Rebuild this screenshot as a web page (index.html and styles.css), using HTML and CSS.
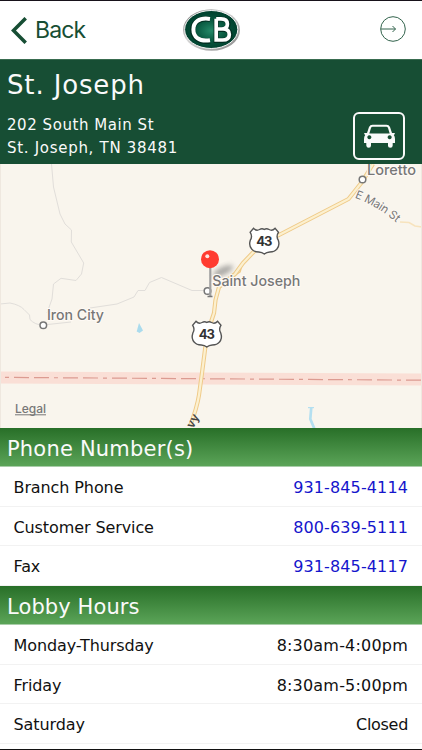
FILE: index.html
```html
<!DOCTYPE html>
<html lang="en">
<head>
<meta charset="utf-8">
<title>St. Joseph branch</title>
<link rel="stylesheet" href="styles.css">
</head>
<body>
<div class="screen">
  <header class="navbar">
    <a class="back">
      <svg width="16" height="27" viewBox="0 0 16 27"><path d="M14.7 1.2 2.5 13.5 14.7 25.8" fill="none" stroke="#174e34" stroke-width="3.5"/></svg>
      <span>Back</span>
    </a>
    <svg class="logo" width="60" height="44" viewBox="181 8 60 44">
      <defs>
        <radialGradient id="oval" cx=".5" cy=".53" r=".5"><stop offset="0" stop-color="#248968"/><stop offset=".6" stop-color="#06543c"/><stop offset="1" stop-color="#00412e"/></radialGradient>
        <linearGradient id="rim" x1="0" y1="0" x2="1" y2="1"><stop offset="0" stop-color="#686868"/><stop offset=".4" stop-color="#d8d8d8"/><stop offset="1" stop-color="#858585"/></linearGradient>
      </defs>
      <ellipse cx="211.5" cy="30" rx="28.5" ry="20.8" fill="url(#rim)"/>
      <ellipse cx="211.2" cy="29.5" rx="26.6" ry="19" fill="url(#oval)" stroke="#f4f4f4" stroke-width="1"/>
      <path d="M210 19.2C199 17.5 192.7 23 192.7 30S199 42.8 210 41" fill="none" stroke="#032f22" stroke-width="5.5"/>
      <path d="M210 18.9C198.5 17.2 193.4 22.5 193.4 29.5S198.5 42 210 40.3" fill="none" stroke="#fff" stroke-width="4"/>
      <path d="M216.2 19V40.3H223Q230 40.3 230 34.5 230 29.3 223.5 29.3H217M216.2 19H221.5Q228 19 228 24.2 228 29.3 222 29.3" fill="none" stroke="#032f22" stroke-width="5.2"/>
      <path d="M216.2 18.8V40H222.5Q229.3 40 229.3 34.5 229.3 29 223 29H217M216.2 18.8H221Q227.4 18.8 227.4 24 227.4 29 221.5 29" fill="none" stroke="#fff" stroke-width="3.7"/>
    </svg>
    <svg class="forward" width="28" height="28" viewBox="0 0 28 28"><g fill="none" stroke="#32634c" stroke-width="1"><circle cx="14" cy="14" r="12.3"/><path d="M2 14H16.5M13.5 11 16.5 14 13.5 17"/></g></svg>
  </header>

  <section class="branch">
    <div>
      <h1>St. Joseph</h1>
      <p class="street">202 South Main St</p>
      <p class="city">St. Joseph, TN 38481</p>
    </div>
    <a class="directions">
      <svg width="31" height="24" viewBox="0 0 31 24"><path fill="#fafafa" fill-rule="evenodd" d="M8.5.7H22.5Q25 .7 26 3L28 9H30.2Q31.2 9 30.8 10L29.8 11Q31 12.5 31 15V19H28.7V21.5Q28.7 23.8 26.3 23.8T24 21.5V19H7V21.5Q7 23.8 4.7 23.8T2.3 21.5V19H0V15Q0 12.5 1.2 11L.2 10Q-.2 9 .8 9H3L5 3Q6 .7 8.5.7ZM8.7 2.7Q7.4 2.7 7 4L5.3 9.5H25.7L24 4Q23.6 2.7 22.3 2.7ZM5.3 11.3A2 2 0 1 0 5.4 11.3ZM25.6 11.3A2 2 0 1 0 25.7 11.3Z"/></svg>
    </a>
  </section>

  <svg class="map" width="422" height="264" viewBox="0 164 422 264">
    <defs>
      <filter id="soft" x="-50%" y="-50%" width="200%" height="200%"><feGaussianBlur stdDeviation="2.5"/></filter>
      <path id="main-street" d="M354.5 197.5Q379 207 398.5 224.5"/>
      <g id="shield">
        <path d="M-10.8-12.8Q-8-9.7-4.8-11.5Q-2.2-13 0-11.5Q2.2-13 4.8-11.5Q8-9.7 10.8-12.8L14.2-8.8Q11.5-4.5 14-.8Q15.8 4.5 12.5 8.2Q10.5 11 5.5 11Q2.2 11.2 0 13Q-2.2 11.2-5.5 11Q-10.5 11-12.5 8.2Q-15.8 4.5-14-.8Q-11.5-4.5-14.2-8.8Z" fill="#fff" stroke="#555" stroke-width="1.4"/>
        <text y="4.6" text-anchor="middle" textLength="16" class="route">43</text>
      </g>
    </defs>
    <rect y="164" width="422" height="264" fill="#f9f5ed"/>
    <g fill="none" stroke="#e1deda" stroke-width="1">
      <path d="M51.5 164 53.5 187 60 214 65 224 71.5 230 71.3 242 83.7 263 81.5 274 76 280.5 61 278.3 53.5 284 52 299 47 313"/>
      <path d="M0 304 10 303Q20 305 24 309.5L29.5 315 30 319.5Q35 325 43 325L71 322"/>
      <path d="M90 308 117 304 134 297 138 290.5 145 290.5 149.5 282.5 161.5 277.5 192 290.5H207"/>
    </g>
    <path d="M0 377.5 422 379.5" fill="none" stroke="#fadfd6" stroke-width="12"/>
    <path d="M5 377.4 422 380.2" fill="none" stroke="#dc9b91" stroke-width="1.2" stroke-dasharray="4 5 15 5 15 5"/>
    <path d="M139 323 143 330.5 139.5 333 136.7 331.5Z" fill="#aadbed"/>
    <path d="M308 407.6H314" stroke="#b4dff0" stroke-width="1.2"/>
    <path d="M311.3 407 310.3 419 314.5 429" fill="none" stroke="#b4dff0" stroke-width="2.7"/>
    <path d="M400 222 409 222.5 415 226 422 227" fill="none" stroke="#f7e3bd" stroke-width="1.5"/>
    <g fill="none" stroke-linejoin="round">
      <path d="M373 164 362 182 348.5 199 279 235 264 241 243 263 235 274 219 287 215.5 300 214 313 207 334 202 373 199 395Q197 408 190 426" stroke="#efca88" stroke-width="4.2"/>
      <path d="M242 265 240 272 231 278" stroke="#efca88" stroke-width="1.5"/>
      <path d="M373 164 362 182 348.5 199 279 235 264 241 243 263 235 274 219 287 215.5 300 214 313 207 334 202 373 199 395Q197 408 190 426" stroke="#fcf0cf" stroke-width="2.2"/>
    </g>
    <use href="#shield" x="264.3" y="241"/>
    <use href="#shield" x="206.8" y="334"/>
    <g fill="#fff" stroke="#777" stroke-width="1.5"><circle cx="362.5" cy="179.5" r="3.3"/><circle cx="43.3" cy="325.2" r="3.3"/><circle cx="207.5" cy="291" r="3.3"/></g>
    <ellipse cx="223" cy="271" rx="11" ry="4" transform="rotate(-25 223 271)" fill="#777" opacity=".6" filter="url(#soft)"/>
    <path d="M210.3 264V296" stroke="#a1a1a1" stroke-width="2.2"/>
    <path d="M207.5 296.5H212.5" stroke="#777" stroke-width="1.5"/>
    <circle cx="210" cy="259.2" r="9" fill="#ff3b30"/><circle cx="207.3" cy="256.3" r="2" fill="#ffe5e1"/>
    <g class="place">
      <text x="367" y="174.5" textLength="49" lengthAdjust="spacingAndGlyphs">Loretto</text>
      <text x="212.3" y="286" textLength="88" lengthAdjust="spacingAndGlyphs">Saint Joseph</text>
      <text x="47" y="320" textLength="57" lengthAdjust="spacingAndGlyphs">Iron City</text>
    </g>
    <text class="road"><textPath href="#main-street" textLength="49">E Main St</textPath></text>
    <text class="highway-name" x="193" y="429" transform="rotate(-62 193 429)">vy</text>
    <text class="legal" x="15" y="413" textLength="31">Legal</text>
    <path d="M15 414.8H46" stroke="#777" stroke-width="1"/>
    <path d="M.5 164V428M421.5 164V428" stroke="#efe8df" stroke-width="1"/>
  </svg>

  <section>
    <h2 class="phones-title">Phone Number(s)</h2>
    <dl>
      <div class="row"><dt>Branch Phone</dt><dd class="phone">931-845-4114</dd></div>
      <div class="row"><dt>Customer Service</dt><dd class="phone">800-639-5111</dd></div>
      <div class="row"><dt>Fax</dt><dd class="phone">931-845-4117</dd></div>
    </dl>
  </section>
  <section>
    <h2 class="hours-title">Lobby Hours</h2>
    <dl>
      <div class="row"><dt>Monday-Thursday</dt><dd class="time">8:30am-4:00pm</dd></div>
      <div class="row"><dt>Friday</dt><dd class="time">8:30am-5:00pm</dd></div>
      <div class="row"><dt>Saturday</dt><dd class="closed">Closed</dd></div>
    </dl>
  </section>
  <div class="bottom-edge"></div>
</div>
</body>
</html>
```
FILE: styles.css
```css
* { box-sizing: border-box; }
body, h1, h2, p, dl, dd { margin: 0; }
body { background: #fff; font-family: "DejaVu Sans", sans-serif; color: #111; overflow: hidden; }
svg { display: block; flex: none; }
.screen { width: 422px; height: 750px; display: flex; flex-direction: column; }
.navbar {
  height: 59px; flex: none; border-top: 1px solid #17121a; background: #fff;
  display: grid; grid-template-columns: 1fr 60px 1fr; align-items: center;
}
.back { display: flex; align-items: center; gap: 8px; padding: 0 0 0 11px; color: #174e34; font: 23px/28px Inter, sans-serif; letter-spacing: -.9px; }
.forward { justify-self: end; margin-right: 15px; margin-top: -3px; }
.branch {
  height: 105px; flex: none; background: #174e34; border-top: 1px solid #396c50; color: #fafafa;
  display: flex; justify-content: space-between; padding: 8px 17px 0 7px;
}
h1 { font-size: 26px; line-height: 34px; font-weight: 400; letter-spacing: .85px; }
.street, .city { font-size: 15px; line-height: 23px; letter-spacing: .55px; }
.city { letter-spacing: .7px; }
.street { margin-top: 11px; padding-top: 1px; }
.directions {
  width: 52px; height: 48px; margin-top: 44px; border: 2px solid #fafafa; border-radius: 6px;
  display: flex; align-items: center; justify-content: center;
}
.map { font-family: Inter, sans-serif; }
.place { font-size: 14.5px; font-weight: 500; fill: #777; stroke: #fffaf5; stroke-width: 2px; paint-order: stroke; }
.route { font-size: 13px; font-weight: 700; fill: #333; }
.road { font-size: 11.5px; fill: #777; stroke: #fffaf5; stroke-width: 1.5px; paint-order: stroke; }
.highway-name { font-size: 12px; font-weight: 600; fill: #444; }
.legal { font-size: 12px; font-weight: 500; fill: #777; }
h2 {
  height: 39.3px; padding-left: 7px; font-size: 21px; line-height: 42px; font-weight: 400; color: #fafafa;
  background: linear-gradient(#286f28, #5ba458); border-bottom: 1px solid #a9cda9;
}
.phones-title { letter-spacing: .2px; }
.hours-title { letter-spacing: .1px; }
.row {
  height: 39.5px; padding: 0 14px 0 13.5px; border-bottom: 1px solid #f2f2f2;
  display: flex; justify-content: space-between; font-size: 16px; line-height: 41px;
}
dt { letter-spacing: -.1px; }
.phone { color: #1515cc; letter-spacing: .12px; }
.time { letter-spacing: .2px; }
.closed { letter-spacing: -.3px; }
.bottom-edge { height: 1px; margin-top: auto; background: #111; }
```
